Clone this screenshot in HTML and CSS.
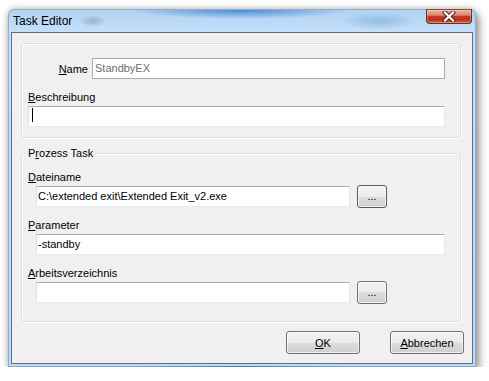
FILE: index.html
```html
<!DOCTYPE html>
<html lang="de">
<head>
    <meta charset="UTF-8">
    <title>Task Editor</title>
    <link rel="stylesheet" href="styles.css">
</head>
<body>
    <div class="window">
        <!-- Title bar -->
        <div class="titlebar">
            <span class="title">Task Editor</span>
            <div class="close">
                <svg width="14" height="11" viewBox="0 0 14 11">
                    <path d="M3 1.5 L11 9.5 M11 1.5 L3 9.5" stroke="#4a1f1a" stroke-width="4" stroke-linecap="square"/>
                    <path d="M3 1.5 L11 9.5 M11 1.5 L3 9.5" stroke="#ffffff" stroke-width="2.2" stroke-linecap="square"/>
                </svg>
            </div>
        </div>

        <div class="client">
            <!-- General -->
            <div class="group group-general">
                <div class="name-row">
                    <span class="name-label"><u>N</u>ame</span>
                    <div class="field field-name field-disabled">StandbyEX</div>
                </div>
                <span class="label label-desc"><u>B</u>eschreibung</span>
                <div class="field field-desc"><span class="caret"></span></div>
            </div>

            <!-- Prozess Task -->
            <div class="group group-task">
                <span class="group-title">P<u>r</u>ozess Task</span>
                <span class="label label-file"><u>D</u>ateiname</span>
                <div class="browse-row">
                    <div class="field field-short">C:\extended exit\Extended Exit_v2.exe</div>
                    <button class="btn btn-browse btn-focus">...</button>
                </div>
                <span class="label label-param"><u>P</u>arameter</span>
                <div class="field field-param">-standby</div>
                <span class="label label-dir"><u>A</u>rbeitsverzeichnis</span>
                <div class="browse-row">
                    <div class="field field-short"></div>
                    <button class="btn btn-browse">...</button>
                </div>
            </div>

            <div class="actions">
                <button class="btn btn-wide"><u>O</u>K</button>
                <button class="btn btn-wide"><u>A</u>bbrechen</button>
            </div>
        </div>
    </div>
</body>
</html>
```

FILE: styles.css
```css
* {
    box-sizing: border-box;
}

body {
    margin: 0;
    background-color: #ffffff;
    font-family: "Liberation Sans", Arial, sans-serif;
    font-size: 11px;
    color: #000000;
}

/* Window frame */
.window {
    width: 468px;
    height: 358px;
    margin: 9px 0 0 8px;
    padding: 0 2px 2px;
    border: 1px solid rgba(70, 90, 120, 0.35);
    border-radius: 6px 6px 0 0;
    background:
        radial-gradient(ellipse 110px 9px at 232px 0px, rgba(55, 125, 205, 0.85), rgba(55, 125, 205, 0)),
        radial-gradient(ellipse 14px 6px at 84px 11px, rgba(120, 130, 145, 0.45), rgba(120, 130, 145, 0)),
        radial-gradient(ellipse 40px 9px at 370px 11px, rgba(120, 170, 210, 0.6), rgba(120, 170, 210, 0)),
        linear-gradient(to bottom, #b2d2f2 0, #c4e0fb 22px, #bcd9f5 100%);
    box-shadow: 0 0 7px rgba(0, 0, 0, 0.3), 4px 5px 9px rgba(0, 0, 0, 0.3);
}

.titlebar {
    height: 22px;
    display: flex;
    justify-content: space-between;
    align-items: flex-start;
}

.title {
    padding: 4px 0 0 2px;
    font-size: 12px;
    line-height: 14px;
}

.close {
    width: 46px;
    height: 15px;
    margin-top: -1px;
    margin-right: 1px;
    display: flex;
    align-items: center;
    justify-content: center;
    border: 1px solid #6e2b20;
    border-top-color: #8a4a40;
    border-radius: 0 0 4px 4px;
    background: linear-gradient(to bottom, #eab1a4 0%, #d98672 40%, #c23a22 50%, #b8321b 75%, #d66444 100%);
    box-shadow: inset 0 0 0 1px rgba(255, 220, 210, 0.35);
}

/* Client area */
.client {
    height: 332px;
    padding: 10px 8px 0 9px;
    border: 1px solid #5e6f82;
    background-color: #f0f0f0;
}

.group {
    position: relative;
    width: 440px;
    padding: 0 15px 0 6px;
    border: 1px solid #d5dfe5;
    border-radius: 3px;
    box-shadow: inset 1px 1px 0 #ffffff, 1px 1px 0 #ffffff;
}

.group-general {
    height: 95px;
    padding-top: 14px;
}

.group-task {
    height: 169px;
    margin-top: 15px;
    padding-top: 17px;
}

.group-title {
    position: absolute;
    top: -7px;
    left: 4px;
    padding: 0 2px;
    line-height: 13px;
    background-color: #f0f0f0;
}

.label {
    display: block;
    height: 13px;
    line-height: 13px;
    white-space: nowrap;
}

.label-desc {
    margin: 12px 0 2px;
}

.label-file {
    margin-bottom: 1px;
}

.label-param {
    margin: 11px 0 2px;
}

.label-dir {
    margin: 12px 0 1px;
}

.name-row {
    display: flex;
    align-items: center;
    height: 21px;
}

.name-label {
    width: 60px;
    margin-right: 4px;
    text-align: right;
}

/* Text boxes */
.field {
    height: 21px;
    padding: 0 2px;
    line-height: 19px;
    white-space: nowrap;
    background-color: #ffffff;
    border: 1px solid #e3e9ef;
    border-top-color: #abadb3;
    border-left-color: #dbdfe6;
}

.field-disabled {
    color: #6d6d6d;
    border-color: #acacac;
}

.field-name {
    width: 353px;
}

.field-desc {
    width: 417px;
    padding-left: 3px;
    padding-top: 1px;
}

.caret {
    display: inline-block;
    width: 1px;
    height: 14px;
    vertical-align: top;
    background-color: #000000;
}

.field-param {
    width: 409px;
    margin-left: 8px;
    padding-left: 1px;
}

.browse-row {
    display: flex;
    align-items: center;
    height: 23px;
    margin-left: 8px;
    gap: 7px;
}

.field-short {
    width: 314px;
    padding-left: 1px;
}

/* Buttons */
.btn {
    height: 23px;
    padding: 0;
    font-family: "Liberation Sans", Arial, sans-serif;
    font-size: 11px;
    color: #000000;
    border: 1px solid #707070;
    border-radius: 3px;
    background: linear-gradient(to bottom, #f2f2f2 0%, #ebebeb 50%, #dddddd 50%, #cfcfcf 100%);
    box-shadow: inset 0 0 0 1px rgba(255, 255, 255, 0.7);
}

.btn-browse {
    width: 30px;
    line-height: 21px;
}

.btn-focus {
    border-color: #5a5a5a;
}

.btn-wide {
    width: 74px;
}

.actions {
    display: flex;
    justify-content: flex-end;
    gap: 30px;
    margin-top: 9px;
}
```
